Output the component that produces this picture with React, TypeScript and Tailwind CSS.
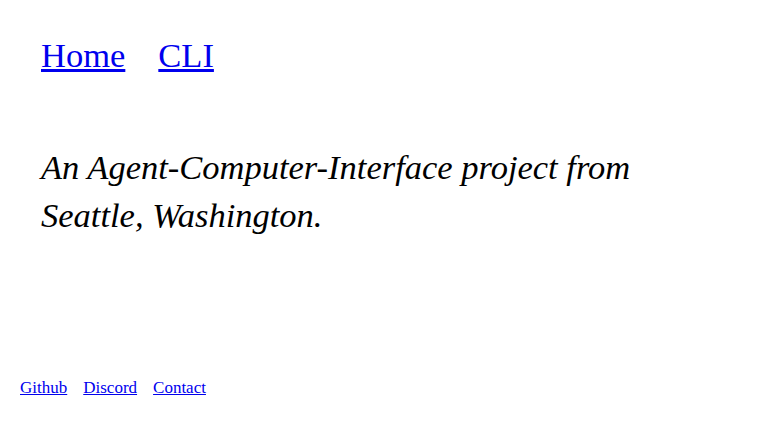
export default function App() {
  return (
    <div className="h-[432px] w-full bg-white font-['Liberation_Serif',serif] text-black">
      <nav className="flex gap-[33px] px-[41px] pt-[35px] text-[34.5px] leading-[40px]">
        <a href="#" className="text-[#0000ee] underline">
          Home
        </a>
        <a href="#" className="text-[#0000ee] underline">
          CLI
        </a>
      </nav>
      <main className="mt-[68px] px-[41px]">
        <p className="max-w-[660px] text-[34.5px] italic leading-[48px]">
          An Agent-Computer-Interface project from Seattle, Washington.
        </p>
      </main>
      <footer className="mt-[140px] flex gap-[16px] px-[20px] text-[17px] leading-[18px]">
        <a href="#" className="text-[#0000ee] underline">
          Github
        </a>
        <a href="#" className="text-[#0000ee] underline">
          Discord
        </a>
        <a href="#" className="text-[#0000ee] underline">
          Contact
        </a>
      </footer>
    </div>
  );
}
